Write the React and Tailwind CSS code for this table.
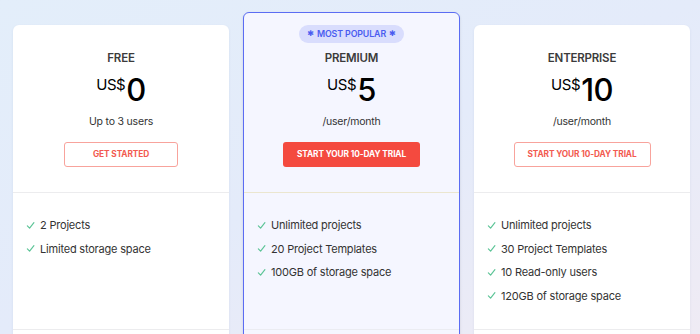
import React from 'react';

const plans = [
  {
    name: 'FREE',
    price: '0',
    sub: 'Up to 3 users',
    cta: 'GET STARTED',
    features: ['2 Projects', 'Limited storage space'],
  },
  {
    name: 'PREMIUM',
    price: '5',
    sub: '/user/month',
    cta: 'START YOUR 10-DAY TRIAL',
    popular: true,
    features: ['Unlimited projects', '20 Project Templates', '100GB of storage space'],
  },
  {
    name: 'ENTERPRISE',
    price: '10',
    sub: '/user/month',
    cta: 'START YOUR 10-DAY TRIAL',
    features: ['Unlimited projects', '30 Project Templates', '10 Read-only users', '120GB of storage space'],
  },
];

const Check = () => (
  <svg width="9" height="9" viewBox="0 0 10 10" fill="none" className="shrink-0">
    <path d="M1.5 5.5 L4 8 L8.8 1.8" stroke="#5cc497" strokeWidth="1.3" strokeLinecap="round" strokeLinejoin="round" />
  </svg>
);

function PlanCard({ plan }) {
  const hot = plan.popular;
  return (
    <div
      className={
        hot
          ? 'w-[217px] rounded-md border border-[#5b6cf3] bg-[#f5f6ff] shadow-sm'
          : 'mt-[13px] w-[216px] rounded-md bg-white shadow-[0_1px_3px_rgba(60,80,140,0.08)]'
      }
    >
      <div
        className={
          'flex flex-col items-center pb-[25px] border-b ' +
          (hot ? 'pt-[12px] border-[#ebe6cf]' : 'pt-[25px] border-[#ececee]')
        }
      >
        {hot && (
          <div className="mb-[7px] flex h-[18px] items-center gap-[3px] rounded-full bg-[#d9ddfd] px-[8px] text-[8.8px] font-semibold tracking-[-0.1px] text-[#4a5cf0]">
            <span className="text-[8px] leading-none" style={{ fontFamily: '"DejaVu Sans", sans-serif' }}>✱</span>
            <span>MOST POPULAR</span>
            <span className="text-[8px] leading-none" style={{ fontFamily: '"DejaVu Sans", sans-serif' }}>✱</span>
          </div>
        )}
        <div className="h-[16px] text-[11.5px] leading-[16px] font-semibold tracking-[-0.2px] text-[#3b3b3b]">{plan.name}</div>
        <div className="mt-[8px] h-[36px] leading-[36px] text-black">
          <span className="mr-[1px] align-[11px] text-[15px] leading-none tracking-[-0.4px]">US$</span>
          <span className="text-[31px] font-medium leading-none tracking-[-0.5px]">{plan.price}</span>
        </div>
        <div className="mt-[4px] h-[16px] text-[10.5px] leading-[16px] tracking-[-0.2px] text-[#333]">{plan.sub}</div>
        <button
          type="button"
          className={
            'mt-[12px] h-[25px] rounded-[3px] text-[8.3px] font-bold tracking-[-0.1px] ' +
            (hot
              ? 'w-[137px] bg-[#f44a3f] text-white'
              : plan.name === 'FREE'
              ? 'w-[114px] border border-[#f8a39c] text-[#f25a50]'
              : 'w-[137px] border border-[#f8a39c] text-[#f25a50]')
          }
        >
          {plan.cta}
        </button>
      </div>
      <div className={'h-[137px] border-b pl-[13px] pt-[24px] ' + (hot ? 'border-[#ebecf2]' : 'border-[#ececee]')}>
        <ul className="flex flex-col gap-[7.6px]">
          {plan.features.map((f) => (
            <li key={f} className="flex h-[16px] items-center gap-[5px] text-[11px] leading-[16px] tracking-[-0.2px] text-[#333]">
              <Check />
              {f}
            </li>
          ))}
        </ul>
      </div>
      <div className="h-[40px]" />
    </div>
  );
}

export default function App() {
  return (
    <div
      className="h-[334px] w-[700px] overflow-hidden bg-gradient-to-br from-[#e3eefa] via-[#e4ebfa] to-[#efebf4]"
      style={{ fontFamily: 'Inter, "Noto Sans", sans-serif' }}
    >
      <div className="flex items-start gap-[14px] pl-[13px] pt-[12px]">
        {plans.map((p) => (
          <PlanCard key={p.name} plan={p} />
        ))}
      </div>
    </div>
  );
}
